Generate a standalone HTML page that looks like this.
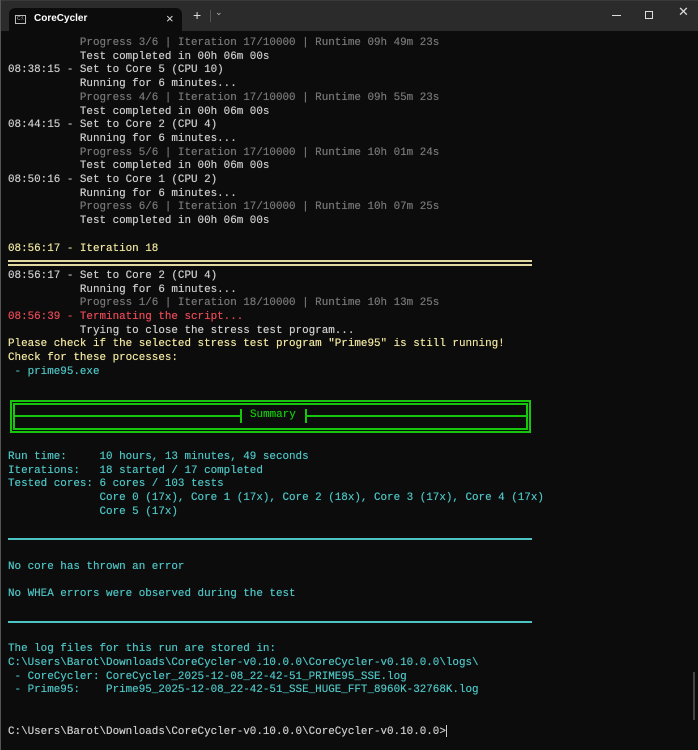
<!DOCTYPE html>
<html><head><meta charset="utf-8"><style>
*{margin:0;padding:0;box-sizing:border-box}
body{width:698px;height:750px;background:#0c0c0c;overflow:hidden;position:relative;font-family:"Liberation Mono",monospace;font-size:10.9px;color:#cccccc}
#bar{position:absolute;left:0;top:0;width:698px;height:31px;background:#2b2b2b;border-top:1px solid #3a3a3a}
#tab{position:absolute;left:9px;top:7px;width:173px;height:24px;background:#0c0c0c;border-radius:6px 6px 0 0;font-family:"Liberation Sans",sans-serif;font-size:10px;color:#fff}
#lb{position:absolute;left:0;top:0;width:1px;height:750px;background:#555}
.l{position:absolute;left:8px;white-space:pre;line-height:13.7px;height:13.7px;transform:translateY(2px);text-shadow:0 0 0.4px currentColor}
.g{color:#767676}.y{color:#f0e6a0}.r{color:#e74856}.c{color:#4ec3c3}.gr{color:#16c60c}
.h{position:absolute;background:#4ec3c3;height:2px}
</style></head><body>
<div id="bar">
<div id="tab">
<div style="position:absolute;left:6px;top:7px;width:11px;height:9px;border:1px solid #bbb;font-size:5px;line-height:6px;color:#bbb;padding-left:1px">C:\</div>
<div style="position:absolute;left:25px;top:5px;font-weight:bold">CoreCycler</div>
<div style="position:absolute;left:157px;top:3px;font-size:13px;color:#ddd">×</div>
</div>
<div style="position:absolute;left:193px;top:6px;color:#ddd;font-family:'Liberation Sans';font-size:14px">+</div>
<div style="position:absolute;left:210px;top:9px;width:1px;height:12px;background:#555"></div>
<div style="position:absolute;left:215px;top:7px;color:#bbb;font-size:9px;font-family:'DejaVu Sans'">⌄</div>
<div style="position:absolute;left:612px;top:14px;width:9px;height:1px;background:#ddd"></div>
<div style="position:absolute;left:645px;top:10px;width:8px;height:8px;border:1px solid #ddd"></div>
<div style="position:absolute;left:678px;top:4px;color:#ddd;font-family:'DejaVu Sans';font-size:13px">✕</div>
</div>
<div id="lb"></div>

<div class="l g" style="top:35px">           Progress 3/6 | Iteration 17/10000 | Runtime 09h 49m 23s</div>
<div class="l" style="top:48.7px">           Test completed in 00h 06m 00s</div>
<div class="l" style="top:62.4px">08:38:15 - Set to Core 5 (CPU 10)</div>
<div class="l" style="top:76.1px">           Running for 6 minutes...</div>
<div class="l g" style="top:89.8px">           Progress 4/6 | Iteration 17/10000 | Runtime 09h 55m 23s</div>
<div class="l" style="top:103.5px">           Test completed in 00h 06m 00s</div>
<div class="l" style="top:117.2px">08:44:15 - Set to Core 2 (CPU 4)</div>
<div class="l" style="top:130.9px">           Running for 6 minutes...</div>
<div class="l g" style="top:144.6px">           Progress 5/6 | Iteration 17/10000 | Runtime 10h 01m 24s</div>
<div class="l" style="top:158.3px">           Test completed in 00h 06m 00s</div>
<div class="l" style="top:172px">08:50:16 - Set to Core 1 (CPU 2)</div>
<div class="l" style="top:185.7px">           Running for 6 minutes...</div>
<div class="l g" style="top:199.4px">           Progress 6/6 | Iteration 17/10000 | Runtime 10h 07m 25s</div>
<div class="l" style="top:213.1px">           Test completed in 00h 06m 00s</div>
<div class="l y" style="top:240.5px">08:56:17 - Iteration 18</div>
<div style="position:absolute;left:8px;top:260px;width:524px;height:2px;background:#e0d8a0"></div>
<div style="position:absolute;left:8px;top:264px;width:524px;height:2px;background:#e0d8a0"></div>
<div class="l" style="top:267.9px">08:56:17 - Set to Core 2 (CPU 4)</div>
<div class="l" style="top:281.6px">           Running for 6 minutes...</div>
<div class="l g" style="top:295.3px">           Progress 1/6 | Iteration 18/10000 | Runtime 10h 13m 25s</div>
<div class="l r" style="top:309px">08:56:39 - Terminating the script...</div>
<div class="l" style="top:322.7px">           Trying to close the stress test program...</div>
<div class="l y" style="top:336.4px">Please check if the selected stress test program "Prime95" is still running!</div>
<div class="l y" style="top:350.1px">Check for these processes:</div>
<div class="l c" style="top:363.8px"> - prime95.exe</div>

<div style="position:absolute;left:10px;top:400px;width:521px;height:33px;border:2px solid #16c60c"></div>
<div style="position:absolute;left:13px;top:403px;width:515px;height:27px;border:2px solid #16c60c"></div>
<div style="position:absolute;left:13px;top:415px;width:228px;height:2px;background:#16c60c"></div>
<div style="position:absolute;left:240px;top:409px;width:2px;height:14px;background:#16c60c"></div>
<div style="position:absolute;left:305px;top:409px;width:2px;height:14px;background:#16c60c"></div>
<div style="position:absolute;left:306px;top:415px;width:222px;height:2px;background:#16c60c"></div>
<div class="l gr" style="top:407px;left:250px">Summary</div>

<div class="l c" style="top:449px">Run time:     10 hours, 13 minutes, 49 seconds</div>
<div class="l c" style="top:462.7px">Iterations:   18 started / 17 completed</div>
<div class="l c" style="top:476.4px">Tested cores: 6 cores / 103 tests</div>
<div class="l c" style="top:490.1px">              Core 0 (17x), Core 1 (17x), Core 2 (18x), Core 3 (17x), Core 4 (17x)</div>
<div class="l c" style="top:503.8px">              Core 5 (17x)</div>
<div class="h" style="left:8px;top:538px;width:524px"></div>
<div class="l c" style="top:558.9px">No core has thrown an error</div>
<div class="l c" style="top:586.3px">No WHEA errors were observed during the test</div>
<div class="h" style="left:8px;top:621px;width:524px"></div>
<div class="l c" style="top:641.1px">The log files for this run are stored in:</div>
<div class="l c" style="top:654.8px">C:\Users\Barot\Downloads\CoreCycler-v0.10.0.0\CoreCycler-v0.10.0.0\logs\</div>
<div class="l c" style="top:668.5px"> - CoreCycler: CoreCycler_2025-12-08_22-42-51_PRIME95_SSE.log</div>
<div class="l c" style="top:682.2px"> - Prime95:    Prime95_2025-12-08_22-42-51_SSE_HUGE_FFT_8960K-32768K.log</div>
<div class="l" style="top:723.3px">C:\Users\Barot\Downloads\CoreCycler-v0.10.0.0\CoreCycler-v0.10.0.0&gt;<span style="display:inline-block;width:1px;height:12px;background:#ccc;vertical-align:middle"></span></div>
<div style="position:absolute;left:693px;top:672px;width:2px;height:48px;background:#444"></div>
</body></html>
